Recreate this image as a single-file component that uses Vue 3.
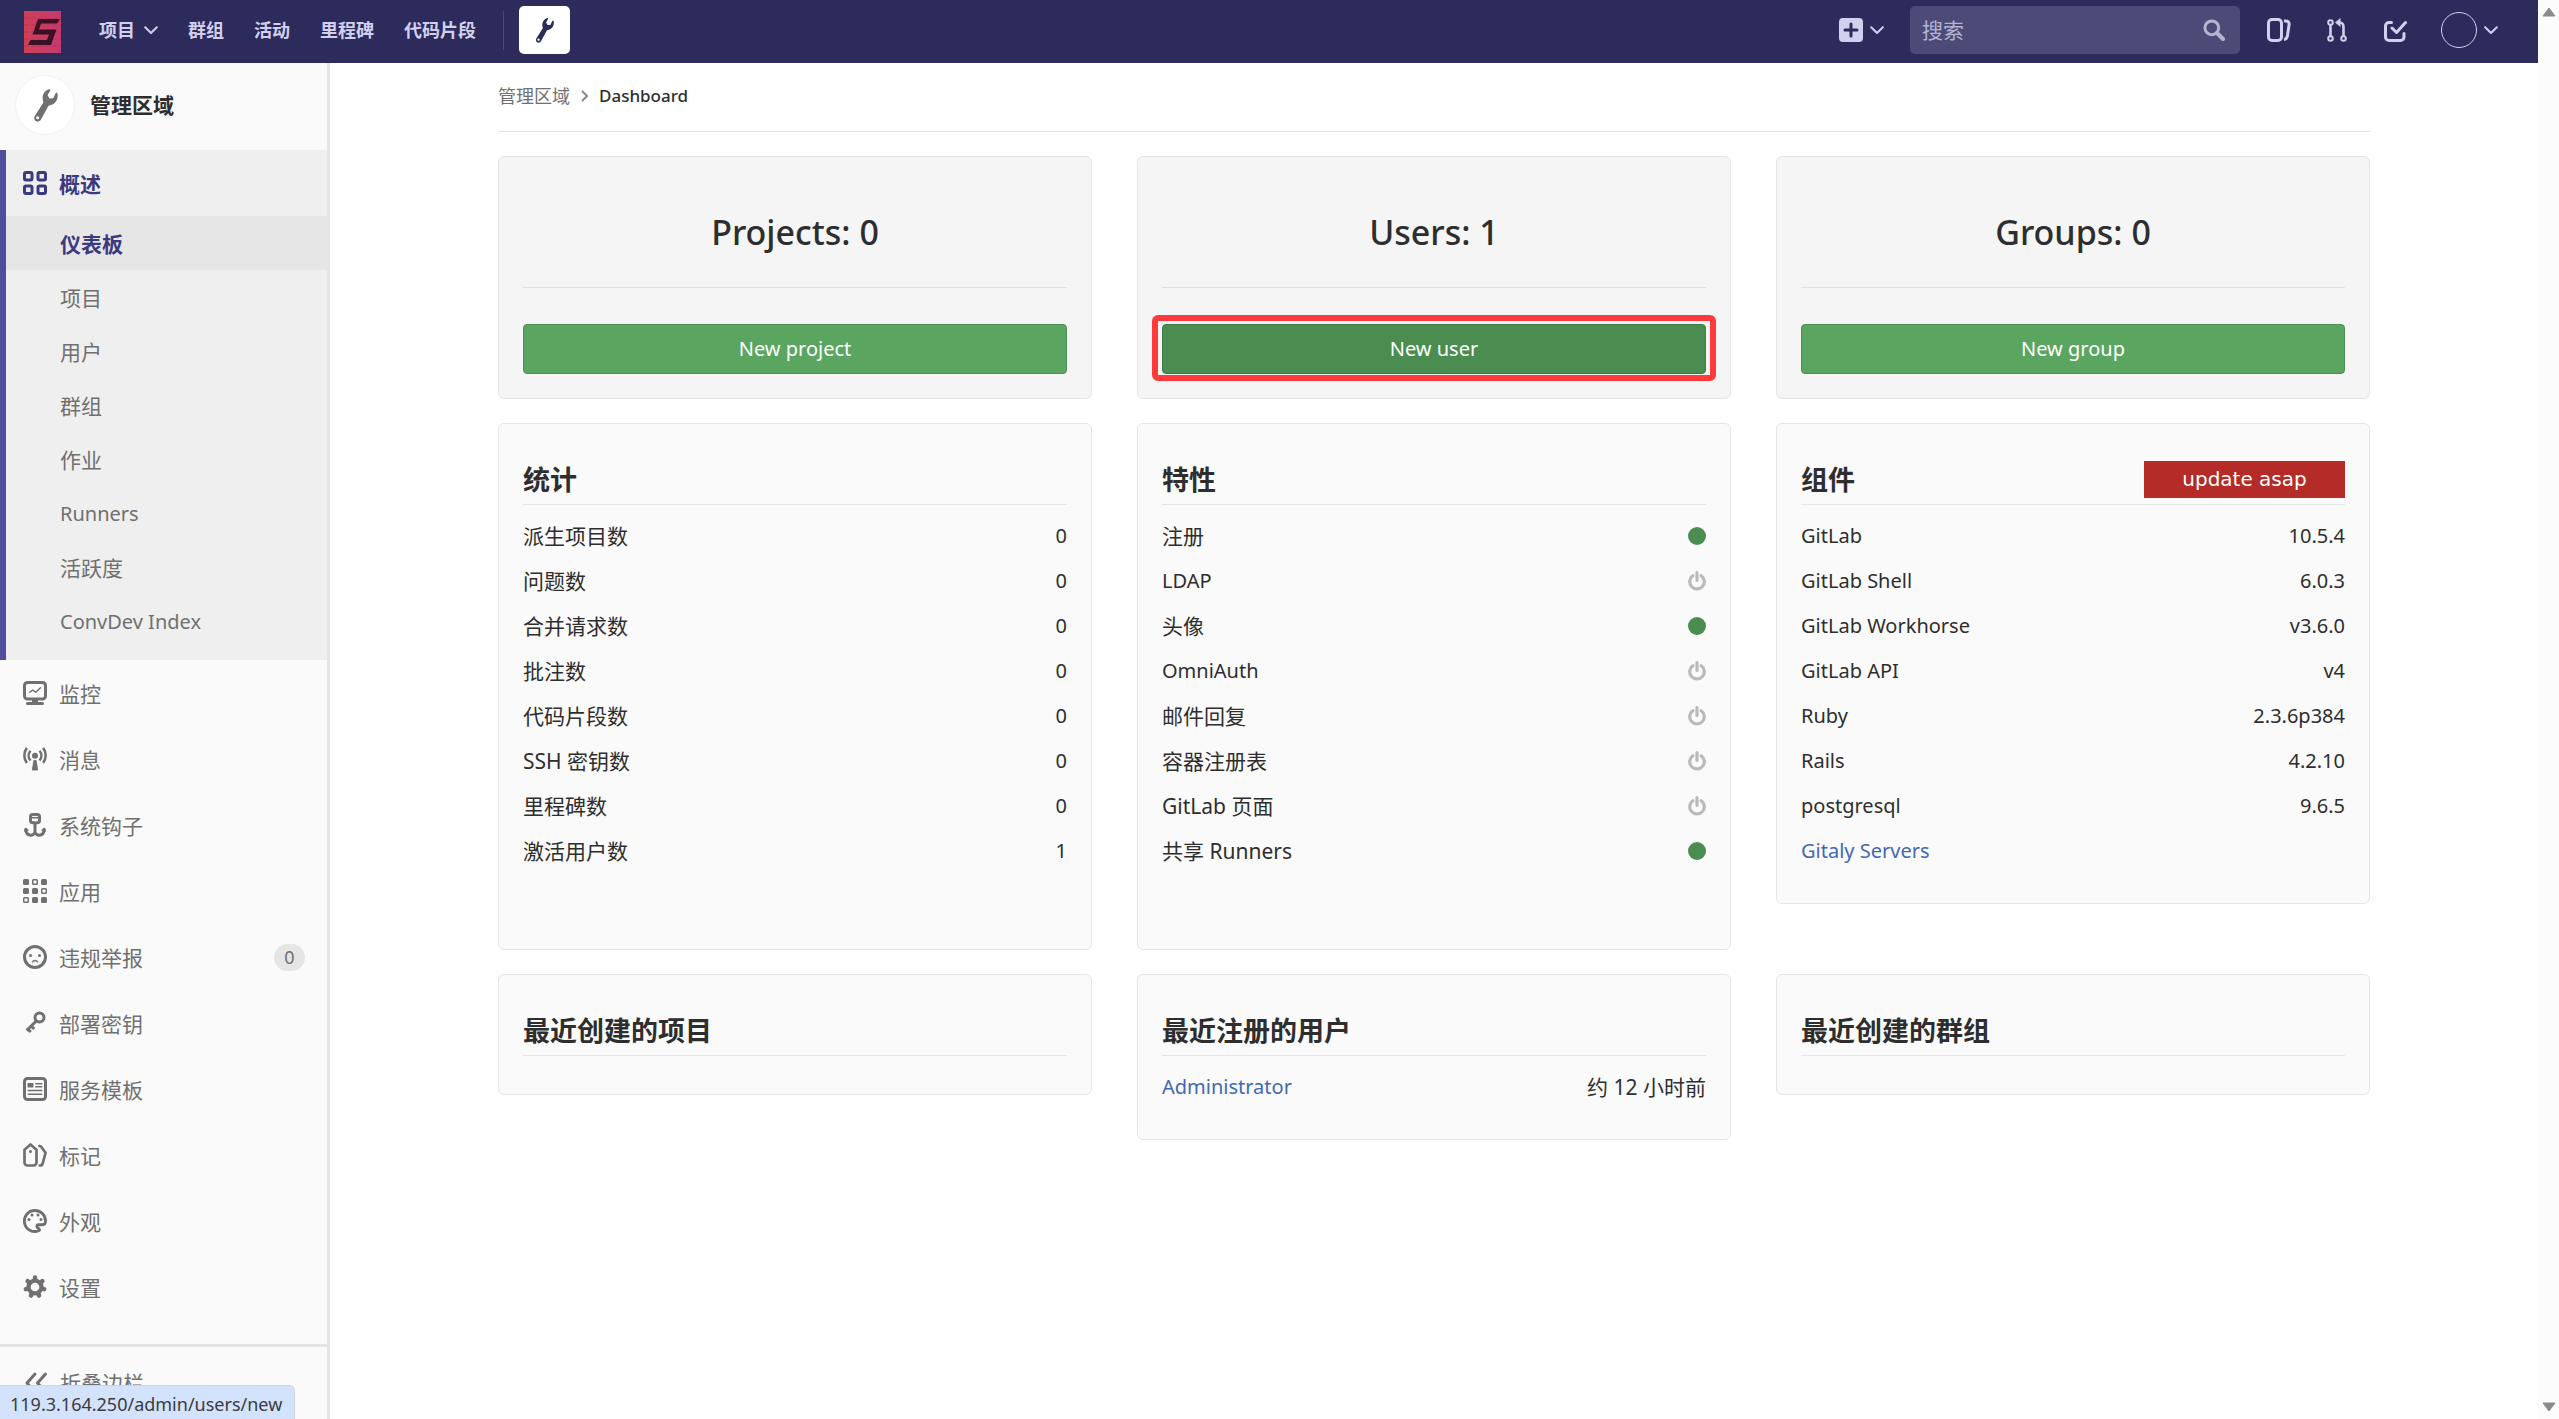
<script setup>
import { ref } from 'vue'

const search = ref('')

const navLinks = ['群组', '活动', '里程碑', '代码片段']

const subItems = ['仪表板', '项目', '用户', '群组', '作业', 'Runners', '活跃度', 'ConvDev Index']

const menuItems = [
  { icon: 'monitor', label: '监控' },
  { icon: 'broadcast', label: '消息' },
  { icon: 'hook', label: '系统钩子' },
  { icon: 'apps', label: '应用' },
  { icon: 'abuse', label: '违规举报', badge: '0' },
  { icon: 'key', label: '部署密钥' },
  { icon: 'template', label: '服务模板' },
  { icon: 'labels', label: '标记' },
  { icon: 'palette', label: '外观' },
  { icon: 'gear', label: '设置' },
]

const counters = [
  { title: 'Projects: 0', action: 'New project' },
  { title: 'Users: 1', action: 'New user', active: true },
  { title: 'Groups: 0', action: 'New group' },
]

const stats = [
  ['派生项目数', '0'],
  ['问题数', '0'],
  ['合并请求数', '0'],
  ['批注数', '0'],
  ['代码片段数', '0'],
  ['SSH 密钥数', '0'],
  ['里程碑数', '0'],
  ['激活用户数', '1'],
]

const features = [
  ['注册', true],
  ['LDAP', false],
  ['头像', true],
  ['OmniAuth', false],
  ['邮件回复', false],
  ['容器注册表', false],
  ['GitLab 页面', false],
  ['共享 Runners', true],
]

const components = [
  ['GitLab', '10.5.4'],
  ['GitLab Shell', '6.0.3'],
  ['GitLab Workhorse', 'v3.6.0'],
  ['GitLab API', 'v4'],
  ['Ruby', '2.3.6p384'],
  ['Rails', '4.2.10'],
  ['postgresql', '9.6.5'],
]

const isLatin = (text) => /^[\x20-\x7e]+$/.test(text)
</script>

<template>
  <div class="shell">
    <svg class="defs" aria-hidden="true">
      <symbol id="wrench" viewBox="0 0 24 33">
        <path d="M15.500 1.200C11.500 2.500 9 6 9.200 10c.1 2 .8 3.300 .6 4.300L1.600 27.200c-1 1.800-.6 3.900 1 4.900 1.700 1 3.800.4 4.900-1.300l7.300-13.400c.8-.9 2.300-.8 3.900-1.500 4-1.800 5.900-6.100 4.900-10.400-.2-1.300-1.100-1.300-1.700-.3L19.500 10l-3.700.1-1.800-3.200 2.500-4.300c.5-1-.1-1.700-1-1.400zM4.400 27.300a1.500 1.500 0 1 1 0 3 1.500 1.500 0 0 1 0-3z" fill="currentColor" fill-rule="evenodd" />
      </symbol>
      <symbol id="chevron" viewBox="0 0 14 9">
        <path d="M1.200 1.200 7 7l5.800-5.800" fill="none" stroke="currentColor" stroke-width="2" stroke-linecap="round" stroke-linejoin="round" />
      </symbol>
      <symbol id="power" viewBox="0 0 18 20">
        <path d="M4.800 4.700a7.300 7.300 0 1 0 8.400 0M9 1.700v7.800" fill="none" stroke="currentColor" stroke-width="3.200" stroke-linecap="round" />
      </symbol>
      <symbol id="overview" viewBox="0 0 16 16">
        <g fill="none" stroke="currentColor" stroke-width="2">
          <rect x="1" y="1" width="5" height="5" rx="1" /><rect x="10" y="1" width="5" height="5" rx="1" />
          <rect x="1" y="10" width="5" height="5" rx="1" /><rect x="10" y="10" width="5" height="5" rx="1" />
        </g>
      </symbol>
      <symbol id="monitor" viewBox="0 0 16 16">
        <g fill="none" stroke="currentColor" stroke-linecap="round" stroke-linejoin="round">
          <rect x="1" y="1" width="14" height="11" rx="2" stroke-width="2" />
          <path d="M3 15h10" stroke-width="2" />
          <path d="M8 12v3" stroke-width="4" stroke-linecap="butt" />
          <path d="m4.500 7.500 2-1.500 2 1.500 3.200-3" stroke-width="1" />
        </g>
      </symbol>
      <symbol id="broadcast" viewBox="0 0 16 16">
        <circle cx="8" cy="5.800" r="2" fill="currentColor" />
        <path d="M7.200 9h1.600l1 6.400H6.200z" fill="currentColor" stroke="currentColor" stroke-width=".5" stroke-linejoin="round" />
        <g fill="none" stroke="currentColor" stroke-width="1.700">
          <path d="M5 2.500a5 5 0 0 0 0 6.500M11 2.500a5 5 0 0 1 0 6.500M2.600.6a8.200 8.200 0 0 0 0 10M13.400.6a8.200 8.200 0 0 1 0 10" />
        </g>
      </symbol>
      <symbol id="hook" viewBox="0 0 16 16">
        <g fill="none" stroke="currentColor" stroke-width="2" stroke-linecap="round">
          <rect x="5" y="1" width="6" height="5.500" rx="1.500" />
          <path d="M5 3.200h6" stroke-width="1" />
          <path d="M8 7v6M1.800 11c.3 2.300 1.500 3.800 3.200 3.800S8 13.500 8 12.500c0 1 1.300 2.300 3 2.300s2.900-1.500 3.200-3.800" />
          <path d="m1.200 12 .8-1.500 1.300 1M14.800 12l-.8-1.500-1.300 1" stroke-width="1" />
        </g>
      </symbol>
      <symbol id="apps" viewBox="0 0 16 16">
        <g fill="currentColor">
          <rect width="4" height="4" rx="1" /><rect x="12" width="4" height="4" rx="1" />
          <rect y="6" width="4" height="4" rx="1" /><rect x="6" y="6" width="4" height="4" rx="1" />
          <rect x="6" y="12" width="4" height="4" rx="1" /><rect x="12" y="12" width="4" height="4" rx="1" />
        </g>
        <g fill="none" stroke="currentColor">
          <rect x="6.500" y=".5" width="3" height="3" rx=".5" /><rect x="12.500" y="6.500" width="3" height="3" rx=".5" />
          <rect x=".5" y="12.500" width="3" height="3" rx=".5" />
        </g>
      </symbol>
      <symbol id="abuse" viewBox="0 0 16 16">
        <circle cx="8" cy="8" r="7" fill="none" stroke="currentColor" stroke-width="2" />
        <circle cx="5" cy="7" r="1" fill="currentColor" /><circle cx="11" cy="7" r="1" fill="currentColor" />
        <path d="M6.300 11.200c.8-1.200 2.600-1.200 3.400 0" fill="none" stroke="currentColor" stroke-linecap="round" />
      </symbol>
      <symbol id="key" viewBox="0 0 16 16">
        <g fill="none" stroke="currentColor" stroke-width="2">
          <circle cx="11" cy="4.300" r="3" />
          <path d="m9 6.500-6.600 6.600M3.200 12l2 2M5.500 10l2 2" />
        </g>
      </symbol>
      <symbol id="template" viewBox="0 0 16 16">
        <rect x="1" y="1" width="14" height="14" rx="2" fill="none" stroke="currentColor" stroke-width="2" />
        <rect x="3" y="4" width="4" height="3" rx=".5" fill="currentColor" />
        <path d="M8.500 4.500h4M8.500 6.500h4M3.500 9h9M3.500 11.500h9" stroke="currentColor" stroke-width="1" stroke-linecap="round" />
      </symbol>
      <symbol id="labels" viewBox="0 0 16 16">
        <g fill="none" stroke="currentColor" stroke-width="1.800" stroke-linejoin="round" stroke-linecap="round">
          <path d="M1 4.500 5 1l4 3.500V13a2 2 0 0 1-2 2H3a2 2 0 0 1-2-2zM11 2l1 .3L15 6.500 13.200 13.500c-.3 1-1 1.500-2 1.500" />
        </g>
        <circle cx="5" cy="5.700" r="1" fill="currentColor" />
      </symbol>
      <symbol id="palette" viewBox="0 0 16 16">
        <path d="M8 1a7 7 0 1 0 2.500 13.500c1.200-.5 0-1.600-.7-2-.9-.6-.8-2 .4-2H13c1.300 0 2-1 2-2.500A7 7 0 0 0 8 1z" fill="none" stroke="currentColor" stroke-width="1.900" />
        <g fill="currentColor"><circle cx="4" cy="7" r="1" /><circle cx="6" cy="4" r="1" /><circle cx="10" cy="4" r="1" /><circle cx="12" cy="7" r="1" /></g>
      </symbol>
      <symbol id="gear" viewBox="0 0 16 16">
        <circle cx="8" cy="8" r="4.300" fill="none" stroke="currentColor" stroke-width="2.800" />
        <g stroke="currentColor" stroke-width="3" stroke-linecap="round">
          <path d="M8 1.700v1.200M12.900 4.100l-.9.700M14.100 9.400l-1.200-.3M10.700 13.700l-.5-1.100M5.300 13.700l.5-1.100M1.900 9.400l1.200-.3M3.100 4.100l.9.700" />
        </g>
      </symbol>
    </svg>

    <header class="navbar">
      <a href="#" class="logo" aria-label="Home">
        <svg viewBox="0 0 37 42" width="37" height="42">
          <defs>
            <linearGradient id="logo-fill" x1="0" x2="1">
              <stop offset="0" stop-color="#cf3f55" /><stop offset="1" stop-color="#c43a6e" />
            </linearGradient>
          </defs>
          <rect width="37" height="42" fill="url(#logo-fill)" />
          <path d="M0 7h37M0 14h37M0 21h37M0 28h37M0 35h37" stroke="#a8305a" stroke-width="1" stroke-dasharray="5 2" opacity=".6" />
          <path d="M36 8 33 12.500H17l-2 6h17.500L27 34H4l2.500-5H23l2-5.500H8.500L14 8z" fill="#3a1024" />
        </svg>
      </a>
      <nav class="nav-links">
        <button type="button" class="nav-link">项目 <svg class="chevron"><use href="#chevron" /></svg></button>
        <a v-for="link in navLinks" :key="link" href="#" class="nav-link">{{ link }}</a>
      </nav>
      <a href="#" class="admin-link" aria-label="管理区域"><svg width="19" height="26"><use href="#wrench" /></svg></a>

      <div class="nav-right">
        <button type="button" class="new-menu" aria-label="New">
          <svg viewBox="0 0 24 24" width="24" height="24">
            <rect width="24" height="24" rx="4" fill="currentColor" />
            <path d="M12 6v12M6 12h12" stroke="#2d2b5c" stroke-width="3" stroke-linecap="round" />
          </svg>
          <svg class="chevron"><use href="#chevron" /></svg>
        </button>
        <form class="search" @submit.prevent>
          <input v-model="search" type="text" placeholder="搜索" aria-label="搜索" />
          <svg viewBox="0 0 22 22" width="22" height="22">
            <circle cx="8.800" cy="8.800" r="6.900" fill="none" stroke="currentColor" stroke-width="3" />
            <path d="m14 14 6 6" stroke="currentColor" stroke-width="4" stroke-linecap="round" />
          </svg>
        </form>
        <a href="#" class="icon-link" aria-label="Issues">
          <svg viewBox="0 0 24 24" width="24" height="24" fill="none" stroke="currentColor" stroke-width="3">
            <rect x="1.500" y="1.500" width="13" height="21" rx="3.500" />
            <path d="M17 3h2c2 0 3.400 1.500 3.100 3.500L20.400 18c-.3 2-1.400 3.400-3.400 3.400" />
          </svg>
        </a>
        <a href="#" class="icon-link" aria-label="Merge requests">
          <svg viewBox="0 0 24 24" width="24" height="24" fill="none" stroke="currentColor" stroke-width="2">
            <circle cx="5.500" cy="4.500" r="2.300" /><circle cx="5.500" cy="20.500" r="2.300" /><circle cx="18.500" cy="20.500" r="2.300" />
            <path d="M5.500 7v11M18.500 18V9c0-3-1.500-4.500-4-4.500" stroke-width="2.600" />
            <path d="M15.500 0v9L10 4.500z" fill="currentColor" stroke="none" />
          </svg>
        </a>
        <a href="#" class="icon-link" aria-label="Todos">
          <svg viewBox="0 0 24 24" width="24" height="24" fill="none" stroke="currentColor" stroke-width="3" stroke-linecap="round" stroke-linejoin="round">
            <path d="M8.500 4.500H6A3.500 3.500 0 0 0 2.500 8v11A3.500 3.500 0 0 0 6 22.500h11.500A3.500 3.500 0 0 0 21 19v-3.500" />
            <path d="m9 10 4.500 4.500 9-10" />
          </svg>
        </a>
        <button type="button" class="user-menu" aria-label="Account">
          <span class="avatar"></span>
          <svg class="chevron"><use href="#chevron" /></svg>
        </button>
      </div>
    </header>

    <div class="body">
      <aside class="sidebar">
        <a href="#" class="context">
          <span class="context-icon"><svg width="25" height="34"><use href="#wrench" /></svg></span>
          <strong>管理区域</strong>
        </a>
        <section class="section-active">
          <a href="#" class="menu-item current">
            <svg width="24" height="24"><use href="#overview" /></svg>
            <span>概述</span>
          </a>
          <a
            v-for="(item, i) in subItems"
            :key="item"
            href="#"
            class="sub-item"
            :class="{ selected: i === 0, latin: isLatin(item) }"
          >{{ item }}</a>
        </section>
        <a v-for="item in menuItems" :key="item.label" href="#" class="menu-item">
          <svg width="24" height="24"><use :href="'#' + item.icon" /></svg>
          <span>{{ item.label }}</span>
          <span v-if="item.badge" class="badge">{{ item.badge }}</span>
        </a>
        <button type="button" class="collapse">
          <svg viewBox="0 0 24 24" width="24" height="24" fill="none" stroke="currentColor" stroke-width="3" stroke-linecap="round" stroke-linejoin="round">
            <path d="m11 3-8 9 8 9M21.500 3l-8 9 8 9" />
          </svg>
          <span>折叠边栏</span>
        </button>
      </aside>

      <main class="content">
        <nav class="breadcrumb">
          <a href="#">管理区域</a>
          <svg viewBox="0 0 7 12" width="7" height="12"><path d="m1 1 5 5-5 5" fill="none" stroke="currentColor" stroke-width="2" /></svg>
          <strong>Dashboard</strong>
        </nav>

        <div class="cards">
          <section v-for="counter in counters" :key="counter.title" class="card counter">
            <h2>{{ counter.title }}</h2>
            <div class="action" :class="{ active: counter.active }">
              <a href="#">{{ counter.action }}</a>
            </div>
          </section>

          <section class="card tall">
            <h3>统计</h3>
            <p v-for="[label, value] in stats" :key="label" class="row" :class="{ latin: isLatin(label) }">
              <span>{{ label }}</span><span class="latin">{{ value }}</span>
            </p>
          </section>

          <section class="card tall">
            <h3>特性</h3>
            <p v-for="[label, enabled] in features" :key="label" class="row" :class="{ latin: isLatin(label) }">
              <span>{{ label }}</span>
              <span v-if="enabled" class="dot"></span>
              <svg v-else class="off" width="18" height="20"><use href="#power" /></svg>
            </p>
          </section>

          <section class="card">
            <h3>组件 <a href="#" class="update">update asap</a></h3>
            <p v-for="[label, value] in components" :key="label" class="row latin">
              <span>{{ label }}</span><span>{{ value }}</span>
            </p>
            <p class="row latin"><a href="#">Gitaly Servers</a></p>
          </section>

          <section class="card"><h3>最近创建的项目</h3></section>
          <section class="card">
            <h3>最近注册的用户</h3>
            <p class="row"><a href="#" class="latin">Administrator</a><span>约 12 小时前</span></p>
          </section>
          <section class="card"><h3>最近创建的群组</h3></section>
        </div>
      </main>
    </div>

    <div class="scrollbar" aria-hidden="true">
      <svg viewBox="0 0 14 10" width="14" height="10"><path d="M7 1 13 9H1z" fill="#8b8b8b" stroke="#8b8b8b" stroke-linejoin="round" /></svg>
      <svg viewBox="0 0 14 10" width="14" height="10"><path d="M7 9 13 1H1z" fill="#8b8b8b" stroke="#8b8b8b" stroke-linejoin="round" /></svg>
    </div>

    <div class="status">119.3.164.250/admin/users/new</div>
  </div>
</template>

<style>
body {
  margin: 0;
  background: #fff;
}
</style>

<style scoped>
* {
  box-sizing: border-box;
}

.shell {
  display: grid;
  grid-template-columns: minmax(0, 1fr) 21px;
  grid-template-rows: 63px minmax(0, 1fr);
  height: 100vh;
  overflow: hidden;
  color: #2e2e2e;
  font: 21px/30px "Noto Sans", "Noto Sans CJK SC", sans-serif;
}

.defs {
  position: absolute;
  width: 0;
  height: 0;
}

a {
  color: #4069b3;
  text-decoration: none;
}

button {
  padding: 0;
  border: 0;
  background: none;
  font: inherit;
}

svg {
  display: block;
  flex: none;
}

.chevron {
  width: 14px;
  height: 9px;
}

.latin {
  font-size: 20px;
}

.navbar {
  display: flex;
  align-items: center;
  padding: 0 40px 3px 24px;
  background: #2d2b5c;
  color: #d1d0ee;
}

.navbar a,
.navbar button {
  color: inherit;
}

.logo {
  margin: 4px 38px 0 0;
}

.nav-links {
  display: flex;
  align-items: center;
  gap: 30px;
  height: 39px;
  padding-right: 27px;
  border-right: 1px solid #4b4976;
  font-size: 18px;
  font-weight: 700;
}

.nav-link {
  display: flex;
  align-items: center;
  gap: 9px;
}

.admin-link {
  display: grid;
  place-items: center;
  width: 51px;
  height: 48px;
  margin-left: 15px;
  border-radius: 5px;
  background: #fff;
}

.navbar .admin-link {
  color: #2d2b5c;
}

.nav-right {
  display: flex;
  align-items: center;
  margin-left: auto;
}

.new-menu,
.user-menu {
  display: flex;
  align-items: center;
  gap: 7px;
}

.search {
  display: flex;
  align-items: center;
  width: 330px;
  height: 48px;
  margin: 0 27px 0 26px;
  padding: 0 15px 0 12px;
  border-radius: 5px;
  background: #4c4b78;
  color: #b4b3d2;
}

.search input {
  flex: 1;
  min-width: 0;
  padding: 0;
  border: 0;
  outline: 0;
  background: none;
  color: inherit;
  font: inherit;
}

.search input::placeholder {
  color: #b4b3d2;
}

.icon-link {
  margin-right: 34px;
}

.avatar {
  width: 36px;
  height: 36px;
  border: 1px solid #d1d0ee;
  border-radius: 50%;
}

.body {
  display: flex;
  grid-column: 1;
}

.sidebar {
  display: flex;
  flex: none;
  flex-direction: column;
  width: 330px;
  border-right: 3px solid #e5e5e5;
  background: #fafafa;
}

.sidebar a,
.collapse {
  color: #707070;
}

.context {
  display: flex;
  align-items: center;
  gap: 15px;
  height: 87px;
  padding: 0 0 3px 15px;
}

.sidebar strong {
  color: #2e2e2e;
}

.context-icon {
  display: grid;
  place-items: center;
  width: 60px;
  height: 60px;
  border: 1px solid #f2f2f2;
  border-radius: 50%;
  background: #fff;
}

.section-active {
  padding-bottom: 12px;
  border-left: 6px solid #4f4d9c;
  background: #efefef;
}

.menu-item {
  display: flex;
  align-items: center;
  gap: 12px;
  height: 66px;
  padding: 0 22px 0 23px;
}

.menu-item span {
  padding-top: 1px;
}

.sidebar .current {
  padding-left: 17px;
  color: #3b3a80;
  font-weight: 700;
}

.sub-item {
  display: flex;
  align-items: center;
  height: 54px;
  padding: 2px 0 0 54px;
}

.sidebar .selected {
  background: #e6e6e6;
  color: #3b3a80;
  font-weight: 700;
}

.menu-item .badge {
  width: 31px;
  margin-left: auto;
  padding: 0;
  border-radius: 14px;
  background: #e5e5e5;
  font-size: 18px;
  line-height: 27px;
  text-align: center;
}

.collapse {
  display: flex;
  align-items: center;
  gap: 12px;
  height: 75px;
  margin-top: auto;
  padding-left: 24px;
  border-top: 3px solid #e5e5e5;
}

.content {
  flex: 1;
  min-width: 0;
  max-width: 1920px;
  margin: 0 auto;
  padding: 0 24px;
}

.breadcrumb {
  display: flex;
  align-items: center;
  gap: 11px;
  height: 69px;
  margin-bottom: 24px;
  padding-bottom: 2px;
  border-bottom: 1px solid #e5e5e5;
  color: #8a8a8a;
  font-size: 18px;
}

.breadcrumb a {
  color: #707070;
}

.breadcrumb strong {
  color: #2e2e2e;
  font-size: 17px;
  font-weight: 500;
}

.cards {
  display: grid;
  grid-template-columns: repeat(3, minmax(0, 1fr));
  align-items: start;
  gap: 24px 45px;
}

.card {
  padding: 0 24px 30px;
  border: 1px solid #e5e5e5;
  border-radius: 6px;
  background: #fafafa;
}

.tall {
  padding-bottom: 76px;
}

.counter {
  padding-bottom: 24px;
  background: #f5f5f5;
}

h2 {
  margin: 0 0 36px;
  padding: 51px 0 31px;
  border-bottom: 1px solid #e0e0e0;
  font-size: 34px;
  font-weight: 500;
  line-height: 48px;
  text-align: center;
}

.action {
  position: relative;
}

.action a {
  display: block;
  border: 1px solid #4b8f52;
  border-radius: 4px;
  background: #5aa660;
  color: #fff;
  font-size: 20px;
  line-height: 48px;
  text-align: center;
}

.active a {
  border-color: #3f7a45;
  background: #4b8d50;
}

.active::after {
  position: absolute;
  inset: -9px -10px -7px;
  border: 6px solid #ff3a3a;
  border-radius: 6px;
  content: "";
  pointer-events: none;
}

h3 {
  display: flex;
  align-items: center;
  justify-content: space-between;
  margin: 0 0 8px;
  padding: 36px 0 5px;
  border-bottom: 1px solid #e5e5e5;
  font-size: 27px;
  font-weight: 700;
  line-height: 39px;
}

.update {
  width: 201px;
  background: #b52b27;
  color: #fff;
  font: 20px/37px "DejaVu Sans", sans-serif;
  text-align: center;
}

.row {
  display: flex;
  align-items: center;
  justify-content: space-between;
  height: 45px;
  margin: 0;
}

.dot {
  width: 18px;
  height: 18px;
  border-radius: 50%;
  background: #4b8d50;
}

.off {
  color: #bababa;
}

.scrollbar {
  display: flex;
  flex-direction: column;
  align-items: center;
  justify-content: space-between;
  grid-row: 1 / 3;
  grid-column: 2;
  padding: 7px 0;
  background: #fcfcfc;
}

.status {
  position: absolute;
  bottom: 0;
  left: 0;
  padding: 3px 12px 0 10px;
  border-top: 1px solid #d0d3da;
  border-right: 1px solid #d0d3da;
  border-radius: 0 6px 0 0;
  background: #d3e3fd;
  color: #3c3c3c;
  font-size: 18px;
}
</style>
